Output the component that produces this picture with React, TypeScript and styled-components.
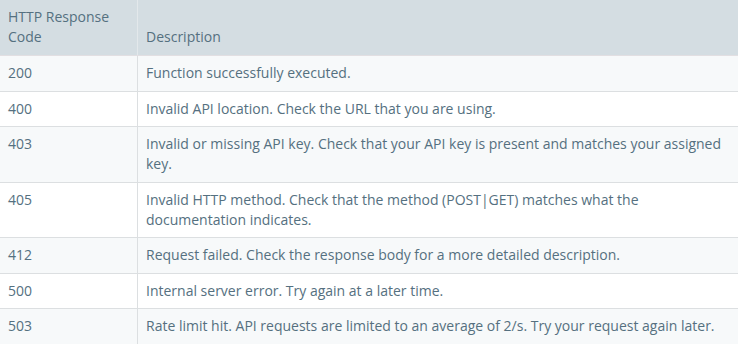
import styled, { createGlobalStyle } from "styled-components";

const GlobalStyle = createGlobalStyle`
  html, body {
    margin: 0;
    padding: 0;
    background: #ffffff;
  }
`;

const StyledTable = styled.table`
  width: 738px;
  border-collapse: collapse;
  font-family: "Open Sans", "Liberation Sans", sans-serif;
  font-size: 14px;
  line-height: 20px;
  color: #557080;
`;

const StyledHeadCell = styled.th<{ $width?: number }>`
  width: ${({ $width }) => ($width ? `${$width}px` : "auto")};
  padding: 7px 8px 8px;
  background: #d4dde2;
  font-weight: normal;
  text-align: left;
  vertical-align: bottom;
  border-right: 1px solid #e3e8eb;
  border-bottom: 1px solid #e2dfe2;

  &:last-child {
    border-right: none;
  }
`;

const StyledRow = styled.tr<{ $striped: boolean }>`
  background: ${({ $striped }) => ($striped ? "#f7f9fa" : "#ffffff")};
  border-bottom: 1px solid #dcdfe1;

  &:last-child {
    border-bottom: none;
  }
`;

const StyledCell = styled.td`
  padding: 7px 8px 7.5px;
  vertical-align: top;
  border-right: 1px solid #dcdfe1;

  &:last-child {
    border-right: none;
    padding-right: 14px;
  }
`;

const responseCodes = [
  { code: "200", description: "Function successfully executed." },
  { code: "400", description: "Invalid API location. Check the URL that you are using." },
  {
    code: "403",
    description:
      "Invalid or missing API key. Check that your API key is present and matches your assigned key.",
  },
  {
    code: "405",
    description:
      "Invalid HTTP method. Check that the method (POST|GET) matches what the documentation indicates.",
  },
  { code: "412", description: "Request failed. Check the response body for a more detailed description." },
  { code: "500", description: "Internal server error. Try again at a later time." },
  {
    code: "503",
    description:
      "Rate limit hit. API requests are limited to an average of 2/s. Try your request again later.",
  },
];

const App = () => {
  return (
    <>
      <GlobalStyle />
      <StyledTable>
        <thead>
          <tr>
            <StyledHeadCell $width={121}>HTTP Response Code</StyledHeadCell>
            <StyledHeadCell>Description</StyledHeadCell>
          </tr>
        </thead>
        <tbody>
          {responseCodes.map((item, index) => (
            <StyledRow key={item.code} $striped={index % 2 === 0}>
              <StyledCell>{item.code}</StyledCell>
              <StyledCell>{item.description}</StyledCell>
            </StyledRow>
          ))}
        </tbody>
      </StyledTable>
    </>
  );
};

export default App;
